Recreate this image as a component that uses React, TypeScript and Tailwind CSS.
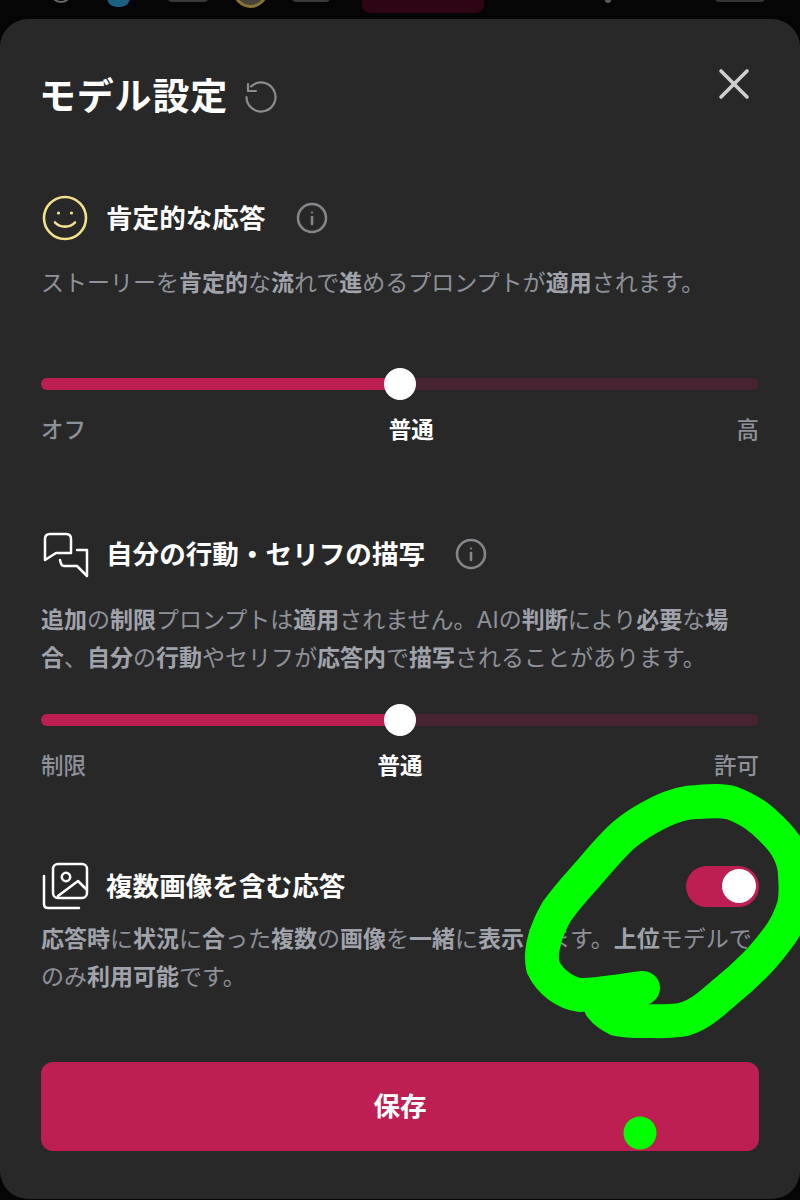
import React from "react";

const B = ({ children }: { children: React.ReactNode }) => (
  <span className="font-semibold text-[#a0a3ab]">{children}</span>
);

const Info = () => (
  <svg width="32" height="32" viewBox="0 0 32 32" fill="none" stroke="#85858a" strokeWidth="2.6" strokeLinecap="round">
    <circle cx="16" cy="16" r="14" />
    <path d="M16 15v7" />
    <circle cx="16" cy="10.5" r="1.1" fill="#85858a" stroke="none" />
  </svg>
);

const Slider = ({ labels }: { labels: [string, string, string] }) => (
  <div>
    <div className="relative h-[34px] flex items-center">
      <div className="h-3 w-full rounded-full bg-[#472232] overflow-hidden">
        <div className="h-full w-1/2 bg-[#bd1f52]" />
      </div>
      <div className="absolute left-[343px] top-px w-8 h-8 rounded-full bg-white" />
    </div>
    <div className="flex justify-between mt-[13px] text-[22.5px] leading-[32px] font-medium text-[#8e9199]">
      <span>{labels[0]}</span>
      <span className="font-bold text-white">{labels[1]}</span>
      <span>{labels[2]}</span>
    </div>
  </div>
);

export default function App() {
  return (
    <div
      className="relative h-[1200px] w-[800px] overflow-hidden bg-[#050505]"
      style={{ fontFamily: 'Inter, "Noto Sans CJK JP", sans-serif' }}
    >
      <div className="flex h-[19px] items-start overflow-hidden">
        <div className="ml-[50px] mt-[-19px] h-[22px] w-[22px] rounded-full border-2 border-[#6a6a6a]" />
        <div className="ml-[35px] mt-[-12px] h-[19px] w-[23px] rounded-full bg-[#1d5f80]" />
        <div className="ml-[38px] mt-[-8px] h-[10px] w-[40px] rounded-sm bg-[#3a3a3a]" />
        <div className="ml-[25px] mt-[-27px] h-[35px] w-[35px] rounded-full border-[3px] border-[#8a7434] bg-[#45433c]" />
        <div className="ml-[24px] mt-[-8px] h-[10px] w-[38px] rounded-sm bg-[#3a3a3a]" />
        <div className="ml-[32px] h-[13px] w-[122px] rounded-b-[8px] bg-[#2e0515]" />
        <div className="ml-[121px] mt-[-5px] h-[8px] w-[6px] rounded-full bg-[#5a5a5a]" />
        <div className="ml-[104px] mt-[-8px] h-[10px] w-[50px] rounded-sm bg-[#333333]" />
      </div>

      <div className="h-[1180px] rounded-[28px] bg-[#282828] px-[41px]">
        <div className="flex items-center justify-between pt-[52px]">
          <div className="flex items-center gap-[17px]">
            <h1 className="ml-[-2px] text-[37px] leading-[52px] font-bold tracking-[0.8px] text-white">モデル設定</h1>
            <svg width="32" height="32" viewBox="0 0 32 32" fill="none" stroke="#8c8c8c" strokeWidth="2.2" strokeLinecap="round" strokeLinejoin="round">
              <path d="M6 5.5A14.5 14.5 0 1 1 1.5 16" />
              <path d="M3 3v7h8" />
            </svg>
          </div>
          <svg className="mt-[-27px] mr-[9px]" width="32" height="32" viewBox="0 0 32 32" fill="none" stroke="#cfcfcf" strokeWidth="3.6" strokeLinecap="round">
            <path d="M3 3l26 26M29 3L3 29" />
          </svg>
        </div>

        <div className="mt-[71px] flex items-center h-[48px]">
          <svg width="48" height="48" viewBox="0 0 48 48" fill="none" className="ml-0">
            <circle cx="24" cy="24" r="21" stroke="#f5e08c" strokeWidth="2.6" />
            <circle cx="17.5" cy="19" r="1.6" fill="#f5e08c" />
            <circle cx="30.5" cy="19" r="1.6" fill="#f5e08c" />
            <path d="M14 28.5c5 5.5 15 5.5 20 0" stroke="#f5e08c" strokeWidth="2.6" strokeLinecap="round" />
          </svg>
          <h2 className="ml-[17px] text-[26.6px] leading-[38px] font-bold text-white">肯定的な応答</h2>
          <div className="ml-[30px] flex"><Info /></div>
        </div>
        <p className="mt-[22px] h-[103px] text-[23px] leading-[38px] text-[#8e9199] whitespace-nowrap">
          ストーリーを<B>肯定的</B>な<B>流</B>れで<B>進</B>めるプロンプトが<B>適用</B>されます。
        </p>
        <Slider labels={["オフ", "普通", "高"]} />

        <div className="mt-[84px] flex items-center h-[48px]">
          <svg width="48" height="48" viewBox="0 0 48 48" fill="none" stroke="#ffffff" strokeWidth="2.5" strokeLinecap="round" strokeLinejoin="round">
            <path d="M4 30V9q0-5 5-5h16q5 0 5 5v14H15z" />
            <path d="M36 20h10v26l-10-10H23q-3 0-4-6" />
          </svg>
          <h2 className="ml-[17px] text-[26.6px] leading-[38px] font-bold text-white">自分の行動・セリフの描写</h2>
          <div className="ml-[30px] flex"><Info /></div>
        </div>
        <p className="mt-[23px] h-[102px] text-[23px] leading-[38px] text-[#8e9199] whitespace-nowrap">
          <B>追加</B>の<B>制限</B>プロンプトは<B>適用</B>されません。AIの<B>判断</B>により<B>必要</B>な<B>場</B>
          <br />
          <B>合</B>、<B>自分</B>の<B>行動</B>やセリフが<B>応答内</B>で<B>描写</B>されることがあります。
        </p>
        <Slider labels={["制限", "普通", "許可"]} />

        <div className="mt-[80px] flex items-center justify-between h-[48px]">
          <div className="flex items-center">
            <svg width="48" height="48" viewBox="0 0 48 48" fill="none" stroke="#ffffff" strokeWidth="2.5" strokeLinecap="round" strokeLinejoin="round">
              <rect x="12" y="2" width="34" height="34" rx="5" />
              <circle cx="25" cy="15" r="4.2" />
              <path d="M17 34l20-15 8 8" />
              <path d="M3 14v28q0 4 4 4h31" />
            </svg>
            <h2 className="ml-[17px] text-[26.6px] leading-[38px] font-bold text-white">複数画像を含む応答</h2>
          </div>
          <div className="flex h-[41px] w-[73px] items-center justify-end rounded-full bg-[#bd1f52] pr-[3px]">
            <div className="h-[34px] w-[34px] rounded-full bg-white" />
          </div>
        </div>
        <p className="mt-[10px] text-[23px] leading-[38px] text-[#8e9199] whitespace-nowrap">
          <B>応答時</B>に<B>状況</B>に<B>合</B>った<B>複数</B>の<B>画像</B>を<B>一緒</B>に<B>表示</B>します。<B>上位</B>モデルで
          <br />
          のみ<B>利用可能</B>です。
        </p>

        <button className="mt-[66px] flex h-[89px] w-full items-center justify-center rounded-xl bg-[#bd1f52] text-[26.6px] font-bold text-white">
          保存
        </button>
      </div>

      <svg className="absolute inset-0 pointer-events-none" width="800" height="1200" fill="none">
        <path
          d="M643 988C625 990 600 995 580 995C565 993 550 982 543 967C539 950 547 928 557 911C570 893 580 883 587 875C600 860 612 845 625 834C637 824 648 818 660 812C675 805 685 802 697 802C710 801 722 800 732 803C745 808 755 814 763 821C773 830 781 838 786 846C792 856 795 866 795 875C796 888 796 897 794 906C790 918 786 927 780 935C772 946 764 956 755 965C745 975 735 984 725 992C716 1000 708 1007 700 1012C692 1017 687 1019 680 1020C665 1022 655 1021 643 1021C630 1021 622 1020 617 1019C610 1016 605 1012 601 1007"
          stroke="#00ff00"
          strokeWidth="34"
          strokeLinecap="round"
          strokeLinejoin="round"
        />
        <circle cx="640" cy="1133" r="16.5" fill="#00ff00" />
      </svg>
    </div>
  );
}
